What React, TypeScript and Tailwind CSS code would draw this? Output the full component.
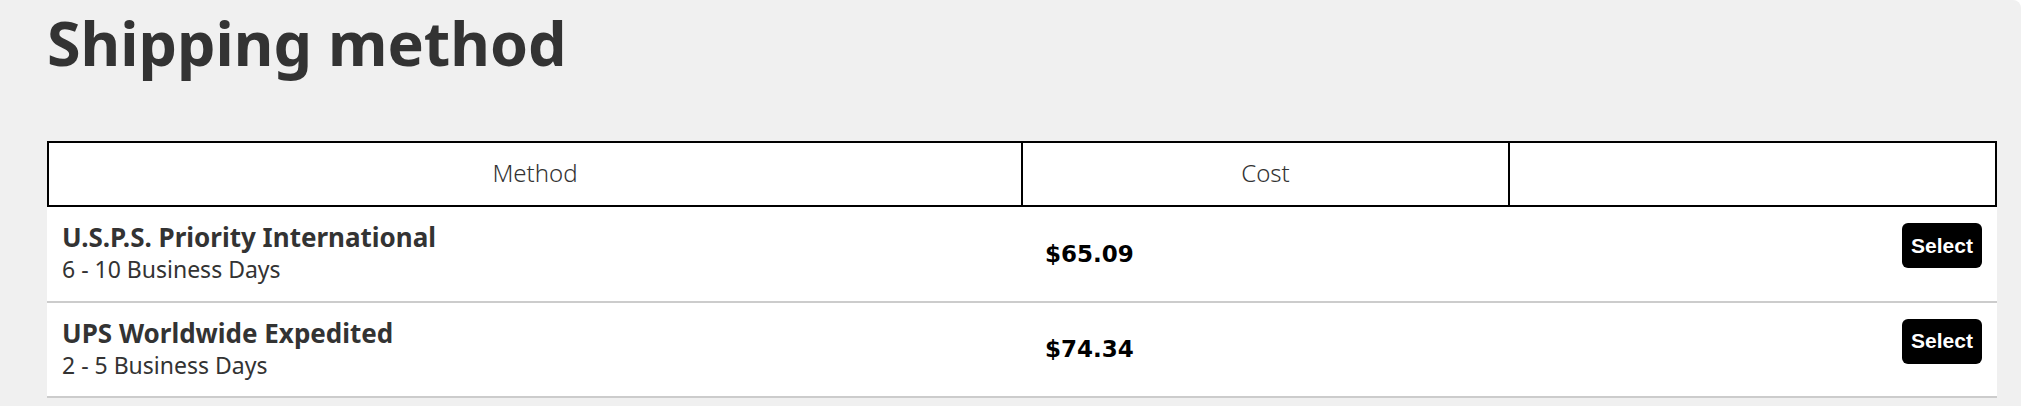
import React from 'react';

interface ShippingOption {
  id: string;
  name: string;
  eta: string;
  cost: string;
}

const options: ShippingOption[] = [
  { id: 'usps', name: 'U.S.P.S. Priority International', eta: '6 - 10 Business Days', cost: '$65.09' },
  { id: 'ups', name: 'UPS Worldwide Expedited', eta: '2 - 5 Business Days', cost: '$74.34' },
];

const sans = "font-['Noto_Sans','DejaVu_Sans',sans-serif]";

export default function App() {
  return (
    <div className="bg-white">
      <div className={`${sans} bg-[#f0f0f0] rounded-tr-lg pl-[47px] pr-[24px] pt-[13px] pb-[40px] text-[#333333]`}>
        <h1 className="text-[61px] leading-[60px] font-bold mb-[68px]">Shipping method</h1>

        <div>
          <div className="grid grid-cols-[972px_487px_487px] h-[66px] border-2 border-black bg-white">
            <div className="flex items-center justify-center pb-[3px] text-[24px] font-light">Method</div>
            <div className="flex items-center justify-center pb-[3px] text-[24px] font-light border-l-2 border-black">Cost</div>
            <div className="border-l-2 border-black"></div>
          </div>

          {options.map((opt) => (
            <div
              key={opt.id}
              className="grid grid-cols-[974px_487px_489px] h-[95.5px] bg-white border-b-2 border-[#cccccc]"
            >
              <div className="pl-[15px] pt-[13px]">
                <div className="text-[26px] leading-[34px] font-bold">{opt.name}</div>
                <div className="text-[23px] leading-[30px]">{opt.eta}</div>
              </div>
              <div className="flex items-center pl-[24px]">
                <span className="font-['DejaVu_Sans',sans-serif] font-bold text-[23px] text-black">{opt.cost}</span>
              </div>
              <div className="flex justify-end items-start pt-[16px] pr-[15px]">
                <button className="w-[80px] h-[45px] flex items-center justify-center rounded-md bg-black text-white font-['Liberation_Sans',Arial,sans-serif] font-bold text-[21px]">
                  Select
                </button>
              </div>
            </div>
          ))}
        </div>
      </div>
    </div>
  );
}
